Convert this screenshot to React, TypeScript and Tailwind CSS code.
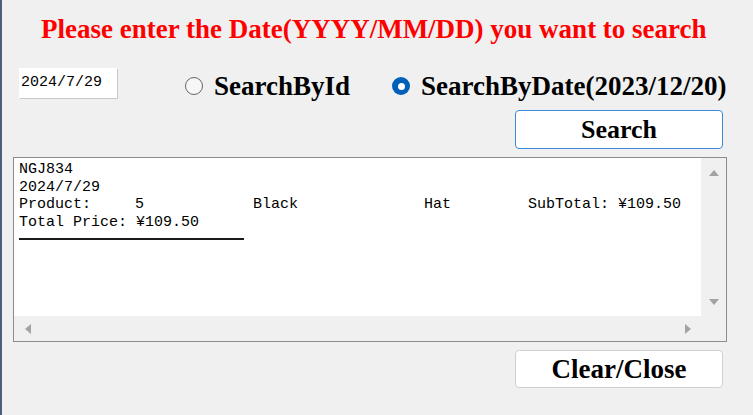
import React from "react";

const serif = "font-['Liberation_Serif','Times_New_Roman',serif]";
const mono = "font-['Liberation_Mono','DejaVu_Sans_Mono',monospace]";

function Arrow({ dir }: { dir: "up" | "down" | "left" | "right" }) {
  const pts = {
    up: "0,6 5,0 10,6",
    down: "0,0 10,0 5,6",
    left: "6,0 6,10 0,5",
    right: "0,0 0,10 6,5",
  }[dir];
  const vertical = dir === "up" || dir === "down";
  return (
    <svg width={vertical ? 10 : 6} height={vertical ? 6 : 10} viewBox={vertical ? "0 0 10 6" : "0 0 6 10"}>
      <polygon points={pts} fill="#a3a3a3" />
    </svg>
  );
}

function Radio({ checked, label, className }: { checked?: boolean; label: string; className?: string }) {
  return (
    <label className={`flex items-center h-[30px] ${className ?? ""}`}>
      {checked ? (
        <span className="w-[18px] h-[18px] rounded-full bg-[#005fb8] flex items-center justify-center">
          <span className="w-[7px] h-[7px] rounded-full bg-white" />
        </span>
      ) : (
        <span className="w-[18px] h-[18px] rounded-full border-[1.5px] border-[#666] bg-[#f7f7f7]" />
      )}
      <span className={`${serif} font-bold text-[27px] leading-[30px] text-black ml-[11px]`}>{label}</span>
    </label>
  );
}

export default function App() {
  return (
    <div className="w-[753px] h-[415px] bg-[#f0f0f0] flex overflow-hidden">
      <div className="w-[2px] h-full bg-[#4b5d80]" />
      <div className="flex-1 flex flex-col pl-[11px]">
        <h1 className={`${serif} font-bold text-[27px] leading-[30px] text-[#ff0000] mt-[14px] ml-[28px] whitespace-nowrap`}>
          Please enter the Date(YYYY/MM/DD) you want to search
        </h1>

        <div className="flex items-start mt-[24px]">
          <div
            className={`${mono} ml-[6px] w-[98px] h-[30px] bg-white shadow-[1px_1px_0_#c9c9c9] text-[15px] leading-[30px] pl-[2px] text-black`}
          >
            2024/7/29
          </div>
          <Radio label="SearchById" className="ml-[68px] mt-[3px]" />
          <Radio checked label="SearchByDate(2023/12/20)" className="ml-[42px] mt-[3px]" />
        </div>

        <div className="flex justify-end pr-[30px] mt-[9px]">
          <button
            className={`${serif} w-[208px] h-[39px] bg-white border border-[#3c8ad8] rounded-[4px] font-bold text-[26px] leading-[30px] text-black`}
          >
            Search
          </button>
        </div>

        <div className="mt-[8px] w-[714px] h-[185px] border border-[#8c8c8c] flex flex-col">
          <div className="flex h-[158px]">
            <div className={`${mono} flex-1 bg-white pl-[5px] pt-[3px] text-[15px] leading-[17.7px] text-black whitespace-pre`}>
              <div>NGJ834</div>
              <div>2024/7/29</div>
              <div className="flex">
                <span className="w-[116px]">Product:</span>
                <span className="w-[118px]">5</span>
                <span className="w-[171px]">Black</span>
                <span className="w-[104px]">Hat</span>
                <span>SubTotal: ¥109.50</span>
              </div>
              <div>Total Price: ¥109.50</div>
              <div className="w-[225px] h-[2px] bg-[#1a1a1a] mt-[6px]" />
            </div>
            <div className="w-[25px] flex flex-col items-center justify-between pt-[12px] pb-[11px]">
              <Arrow dir="up" />
              <Arrow dir="down" />
            </div>
          </div>
          <div className="h-[25px] flex items-center justify-between pl-[11px] pr-[35px]">
            <Arrow dir="left" />
            <Arrow dir="right" />
          </div>
        </div>

        <div className="flex justify-end pr-[30px] mt-[8px]">
          <button
            className={`${serif} w-[208px] h-[38px] bg-white border border-[#d0d0d0] rounded-[4px] font-bold text-[27px] leading-[30px] text-black`}
          >
            Clear/Close
          </button>
        </div>
      </div>
    </div>
  );
}
